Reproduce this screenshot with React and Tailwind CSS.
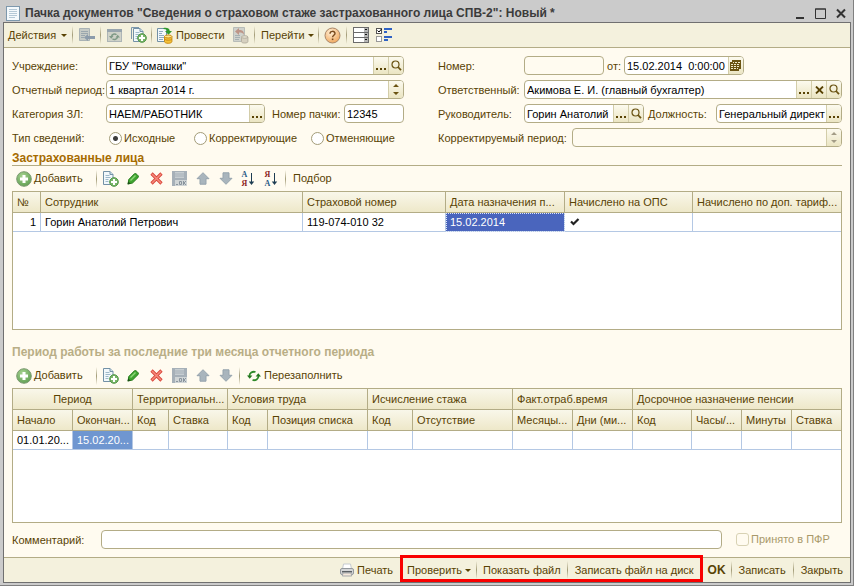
import React, { useState } from "react";

const Sep = () => (
  <span className="h-[18px] w-px shrink-0 bg-linear-to-b from-transparent via-[#a39c78] to-transparent" />
);

const Caret = () => (
  <svg width="6" height="3" viewBox="0 0 6 3" className="shrink-0">
    <path d="M0 0h6L3 3z" fill="#594304" />
  </svg>
);

const DocIcon = () => (
  <svg width="14" height="15" viewBox="0 0 14 15">
    <rect x="0.5" y="0.5" width="13" height="14" fill="#f4f9fc" stroke="#7d98ad" />
    <path d="M3 3.5h8M3 5.5h8M3 7.5h8M3 9.5h8M3 11.5h6" stroke="#b4c8d6" />
  </svg>
);

const SaveCloseIcon = () => (
  <svg width="16" height="16" viewBox="0 0 16 16">
    <path d="M.5 1.5h10v12H.5z" fill="#c6cbc6" stroke="#a9b2b4" />
    <path d="M2 4.500h7M2 6.500h7M2 8.500h4M2 10.500h3" stroke="#9aa7ae" />
    <path d="M5 10.500l4-3.500v2h7v3H9v2z" fill="#8c9cab" />
  </svg>
);

const ReloadIcon = () => (
  <svg width="15" height="13" viewBox="0 0 15 13">
    <rect x="0.5" y="0.5" width="14" height="12" fill="#cfd2c8" stroke="#adb5b6" />
    <path d="M0 0h15v3H0z" fill="#98a5ad" />
    <path d="M4.500 7.500a3 2.800 0 0 1 5-1.700M10.500 8a3 2.800 0 0 1-5 1.700" fill="none" stroke="#7f9a86" strokeWidth="1.500" />
    <path d="M2 7h4.500L4.200 9.700zM8.500 8.500H13l-2.300-2.700z" fill="#7f9a86" />
  </svg>
);

const AddCopyIcon = ({ double }) => (
  <svg width="16" height="16" viewBox="0 0 16 16">
    {double && <path d="M.5 12V.5H8" fill="none" stroke="#7d98ad" />}
    <g transform={double ? "translate(2 1)" : "translate(0 0)"}>
      <path d="M.5 .5h6.500l3 3V13.500H.5z" fill="#f2f8fb" stroke="#7391a6" />
      <path d="M7 .5v3h3" fill="#cfe0ea" stroke="#7391a6" />
      <path d="M2.500 4.500h4M2.500 6.500h5M2.500 8.500h3M2.500 10.500h3" stroke="#9db8c9" />
    </g>
    <circle cx="11" cy="11" r="4.300" fill="#79b668" stroke="#4f9446" />
    <path d="M11 8v6M8 11h6" stroke="#fff" strokeWidth="2" />
  </svg>
);

const PostIcon = () => (
  <svg width="16" height="17" viewBox="0 0 16 17">
    <path d="M.5 1.5h9v13h-9z" fill="#f2f8fb" stroke="#7391a6" />
    <path d="M2 4.500h4M2 6.500h3M2 8.500h5M2 10.500h5M2 12.500h4" stroke="#8fabc0" />
    <path d="M6.500 1C10 .3 12.500 1.500 12.800 4H15l-3.500 3.800L8 4h2.200C10 2.800 8.800 2 6.500 2z" fill="#2f9a2b" />
    <path d="M7.500 9.500v5c0 1 1.500 1.800 3.700 1.800s3.700-.8 3.700-1.800v-5z" fill="#f5c33a" stroke="#c98c14" />
    <ellipse cx="11.200" cy="9.500" rx="3.700" ry="1.500" fill="#fde58b" stroke="#c98c14" />
    <path d="M7.500 12c1 1.700 6.400 1.700 7.400 0" fill="none" stroke="#c98c14" />
  </svg>
);

const UnpostIcon = () => (
  <svg width="16" height="17" viewBox="0 0 16 17" opacity="0.8">
    <path d="M.5 .5h11v14H.5z" fill="#c6cbc9" stroke="#a9b0b0" />
    <path d="M2 8.500h5M2 10.500h5M2 12.500h4" stroke="#93a0a8" />
    <path d="M2 4.500L6 1v2c3.500 0 5 1.200 5 5-1-2-2.200-2.500-5-2.500V8z" fill="#b07f72" />
    <path d="M8.500 10v4.500c0 1 1.200 1.500 3.200 1.500s3.200-.5 3.200-1.500V10z" fill="#cfc9b8" stroke="#a8a294" />
    <ellipse cx="11.700" cy="10" rx="3.200" ry="1.300" fill="#e0dccd" stroke="#a8a294" />
  </svg>
);

const HelpIcon = () => (
  <svg width="17" height="17" viewBox="0 0 17 17">
    <defs>
      <radialGradient id="help" cx="0.4" cy="0.3" r="0.8">
        <stop offset="0" stopColor="#fff0d8" />
        <stop offset="1" stopColor="#efa050" />
      </radialGradient>
    </defs>
    <circle cx="8.500" cy="8.500" r="7.500" fill="url(#help)" stroke="#a8876a" />
    <path d="M6 6.800C6 3.500 11 3.600 11 6.500c0 1.800-2.400 1.800-2.400 3.700" fill="none" stroke="#7a4a1c" strokeWidth="1.400" />
    <rect x="7.800" y="11.500" width="1.600" height="1.600" fill="#7a4a1c" />
  </svg>
);

const ListIcon = () => (
  <svg width="16" height="16" viewBox="0 0 16 16">
    {[0, 5, 10].map((y) => (
      <g key={y}>
        <rect x="0.5" y={y + 0.5} width="15" height="5" fill="#fff" stroke="#6b6b6b" />
        <rect x="11" y={y + 1} width="4" height="4" fill="#b5b5b5" />
        <path d={`M12 ${y + 2}h2v1h-2z`} fill="#111" />
      </g>
    ))}
  </svg>
);

const ChecksIcon = () => (
  <svg width="16" height="16" viewBox="0 0 16 16">
    <rect x="0.5" y="1.5" width="5" height="5" fill="#fff" stroke="#555" />
    <path d="M1.500 3.500l1.500 1.500 2.500-3" fill="none" stroke="#000" />
    <rect x="0.5" y="9.500" width="5" height="5" fill="#fff" stroke="#999" />
    <path d="M8 1h8v2H8zM8 4h3v2H8zM8 9h8v2H8zM8 12h4v2H8z" fill="#2f62c4" />
  </svg>
);

const PlusIcon = () => (
  <svg width="16" height="16" viewBox="0 0 16 16">
    <defs>
      <radialGradient id="plus" cx="0.4" cy="0.3" r="0.8">
        <stop offset="0" stopColor="#a5d18f" />
        <stop offset="1" stopColor="#5b9c4e" />
      </radialGradient>
    </defs>
    <circle cx="8" cy="8" r="7.300" fill="url(#plus)" stroke="#7d9a72" />
    <path d="M8 4v8M4 8h8" stroke="#fff" strokeWidth="3" />
  </svg>
);

const PencilIcon = () => (
  <svg width="13" height="13" viewBox="0 0 13 13">
    <path d="M1 12l.8-4.500L7.500 1.700c1-1 4.800 2.300 3.800 3.600L5.500 11z" fill="#3fa52f" stroke="#267a1c" />
    <path d="M3.500 8.500L8.500 3.500" stroke="#8ed67a" strokeWidth="1.500" />
    <path d="M.5 12.500l.8-3 2.200 2z" fill="#1c4d16" />
  </svg>
);

const DeleteIcon = () => (
  <svg width="13" height="13" viewBox="0 0 13 13">
    <path d="M1.500 1.500l10 10M11.500 1.500l-10 10" stroke="#d9453a" strokeWidth="3.200" />
    <path d="M2 2l9 9M11 2l-9 9" stroke="#f58a7c" strokeWidth="1.500" />
  </svg>
);

const FloppyIcon = () => (
  <svg width="15" height="15" viewBox="0 0 15 15">
    <rect width="15" height="15" fill="#a6b0b8" />
    <rect x="3" y="1" width="9" height="6" fill="#c6cdd1" />
    <path d="M3 3h9M3 5h9" stroke="#a6b0b8" />
    <rect x="3" y="9" width="12" height="6" fill="#d0d5d6" />
    <path d="M4 13.500h2M7.500 10.500h2v3h-2zM11.500 10v4M14 10l-2 2 2 2" fill="none" stroke="#8a959e" />
  </svg>
);

const ArrowIcon = ({ down }) => (
  <svg width="14" height="13" viewBox="0 0 14 13" className={down ? "rotate-180" : ""}>
    <path d="M7 .7l6 6h-3v5.500H4V6.700H1z" fill="#a9b5bd" stroke="#95a3ad" strokeLinejoin="round" />
  </svg>
);

const SortIcon = ({ top, bottom, topClass, bottomClass }) => (
  <span className="flex items-center gap-px font-['Liberation_Serif',serif] text-[8px] leading-[9px] font-bold">
    <span className="flex flex-col">
      <span className={topClass}>{top}</span>
      <span className={bottomClass}>{bottom}</span>
    </span>
    <svg width="7" height="15" viewBox="0 0 7 15">
      <path d="M3.500 2v10" stroke="#1d3c52" />
      <path d="M.8 10.500h5.400L3.500 14z" fill="#1d3c52" />
    </svg>
  </span>
);

const RefillIcon = () => (
  <svg width="14" height="12" viewBox="0 0 14 12">
    <path d="M2.500 6A4.500 4 0 0 1 8.500 2M11.500 6a4.500 4 0 0 1-6 4" fill="none" stroke="#2f8a2a" strokeWidth="1.800" />
    <path d="M0 5.500h5.400L2.700 8.800zM8.600 6.500H14l-2.700-3.300z" fill="#24761f" />
  </svg>
);

const PrinterIcon = () => (
  <svg width="14" height="14" viewBox="0 0 14 14">
    <path d="M3.500 1h7l1 5h-9z" fill="#fff" stroke="#c5cacf" />
    <rect x="0.5" y="5.500" width="13" height="6" rx="1.500" fill="#d3d5d6" stroke="#94999d" />
    <path d="M2 8h10v1.500H2z" fill="#5b6064" />
    <path d="M3 10h8l.7 3H2.300z" fill="#f6e9dc" stroke="#a5a9ab" />
  </svg>
);

const SearchIcon = () => (
  <svg width="11" height="11" viewBox="0 0 11 11">
    <circle cx="4.500" cy="4.500" r="3.500" fill="none" stroke="#6b5413" strokeWidth="1.200" />
    <path d="M7 7l3 3.200" stroke="#6b5413" strokeWidth="1.800" />
  </svg>
);

const CalendarIcon = () => (
  <svg width="11" height="11" viewBox="0 0 11 11" shapeRendering="crispEdges">
    <path d="M2 0h9v9H9v2H0V2h2z" fill="#6b5413" />
    <path
      d="M3 2h1v1H3zM5 2h2v1H5zM8 2h2v1H8zM1 4h2v1H1zM4 4h2v1H4zM7 4h2v1H7zM1 6h2v1H1zM4 6h2v1H4zM7 6h2v1H7zM1 8h2v1H1zM4 8h2v1H4zM7 8h1v1H7z"
      fill="#f1ebcd"
    />
  </svg>
);

const ClearIcon = () => (
  <svg width="9" height="8" viewBox="0 0 9 8">
    <path d="M1 .5l7 7M8 .5l-7 7" stroke="#594304" strokeWidth="1.800" />
  </svg>
);

const SpinIcon = ({ faded }) => (
  <svg width="6" height="11" viewBox="0 0 6 11">
    <path d="M0 3h6L3 0zM0 8h6L3 11z" fill={faded ? "#a39c86" : "#6b5413"} />
  </svg>
);

const DotsIcon = () => (
  <svg width="10" height="10" viewBox="0 0 10 10">
    <path d="M0 7h2v2H0zM4 7h2v2H4zM8 7h2v2H8z" fill="#594304" />
  </svg>
);

const fieldIcons = {
  dots: ["Выбрать", <DotsIcon />],
  search: ["Открыть", <SearchIcon />],
  clear: ["Очистить", <ClearIcon />],
  calendar: ["Календарь", <CalendarIcon />],
  spin: ["Изменить", <SpinIcon />],
  spinOff: ["Изменить", <SpinIcon faded />],
};

const Field = ({ id, value = "", buttons = [], disabled, className = "flex-1" }) => {
  const [text, setText] = useState(value);
  return (
    <div
      className={`flex h-[19px] min-w-0 overflow-hidden rounded-[4px] border border-[#b3ac86] ${
        disabled ? "bg-[#fffbf0]" : "bg-white"
      } ${className}`}
    >
      <input
        id={id}
        type="text"
        value={text}
        disabled={disabled}
        onChange={(e) => setText(e.target.value)}
        className="w-0 min-w-0 flex-1 bg-transparent pt-[2px] pl-[2px] text-black outline-none"
      />
      {buttons.map((name) => (
        <button
          key={name}
          type="button"
          aria-label={fieldIcons[name][0]}
          className="flex w-[15px] shrink-0 items-center justify-center border-l border-[#d3cda9] bg-linear-to-b from-[#fcfaee] to-[#ebe5c3]"
        >
          {fieldIcons[name][1]}
        </button>
      ))}
    </div>
  );
};

const Label = ({ htmlFor, children, className = "" }) => (
  <label htmlFor={htmlFor} className={`shrink-0 pt-[2px] whitespace-nowrap ${className}`}>
    {children}
  </label>
);

const IconButton = ({ label, children, className = "w-[23px]" }) => (
  <button
    type="button"
    aria-label={label}
    className={`flex h-full shrink-0 items-center justify-center ${className}`}
  >
    {children}
  </button>
);

const TableToolbar = ({ children, sortable }) => (
  <div className="flex h-[25px] items-center">
    <button type="button" className="flex w-[84px] items-center gap-[2px] pl-1">
      <PlusIcon />
      <span>
        <u>Д</u>обавить
      </span>
    </button>
    <Sep />
    <div className="flex h-full items-center px-[2px]">
      <IconButton label="Скопировать"><AddCopyIcon /></IconButton>
      <IconButton label="Изменить"><PencilIcon /></IconButton>
      <IconButton label="Удалить"><DeleteIcon /></IconButton>
      <IconButton label="Закончить редактирование"><FloppyIcon /></IconButton>
      <IconButton label="Вверх"><ArrowIcon /></IconButton>
      <IconButton label="Вниз"><ArrowIcon down /></IconButton>
      {sortable && (
        <>
          <IconButton label="По возрастанию">
            <SortIcon top="А" bottom="Я" topClass="text-[#1f5a86]" bottomClass="text-[#8c1c1c]" />
          </IconButton>
          <IconButton label="По убыванию">
            <SortIcon top="Я" bottom="А" topClass="text-[#8c1c1c]" bottomClass="text-[#1f5a86]" />
          </IconButton>
        </>
      )}
    </div>
    <Sep />
    <button type="button" className="flex items-center gap-[3px] px-[7px]">
      {children}
    </button>
  </div>
);

const Th = ({ children, className = "text-left", ...rest }) => (
  <th
    className={`h-[21px] overflow-hidden border-r border-b border-[#b3ac86] bg-linear-to-b from-[#f9f7ea] to-[#eee8c9] px-1 font-normal whitespace-nowrap last:border-r-0 ${className}`}
    {...rest}
  >
    {children}
  </th>
);

const Td = ({ children, className = "text-black" }) => (
  <td
    className={`h-[19px] overflow-hidden border-r border-b border-[#b4c8e4] px-1 whitespace-nowrap last:border-r-0 ${className}`}
  >
    {children}
  </td>
);

const periodGroups = [
  ["Период", 2],
  ["Территориальн...", 2],
  ["Условия труда", 2],
  ["Исчисление стажа", 2],
  ["Факт.отраб.время", 2],
  ["Досрочное назначение пенсии", 4],
];

const periodColumns = [
  "Начало", "Окончан...", "Код", "Ставка", "Код", "Позиция списка", "Код",
  "Отсутствие", "Месяцы...", "Дни (ми...", "Код", "Часы/...", "Минуты", "Ставка",
];

const kinds = [
  ["Исходные", "w-[85px]"],
  ["Корректирующие", "w-[117px]"],
  ["Отменяющие", ""],
];

const App = () => {
  const [kind, setKind] = useState("Исходные");

  return (
    <div className="flex min-h-screen flex-col border-r border-b border-[#808080] bg-[#cbcbcb] pr-[2px] pb-[2px] pl-[3px] font-['Liberation_Sans',sans-serif] text-[11px] leading-[13px] text-[#594304]">
      <header className="flex h-[22px] items-center pt-1 pr-[5px] pl-[3px] text-[#3b3b3b]">
        <DocIcon />
        <h1 className="flex-1 pl-[5px] text-[12px] font-bold whitespace-nowrap">
          Пачка документов "Сведения о страховом стаже застрахованного лица СПВ-2": Новый *
        </h1>
        <div className="flex items-center gap-[10px]">
          <button type="button" aria-label="Свернуть">
            <svg width="9" height="11" viewBox="0 0 9 11"><path d="M0 9h8v2H0z" fill="#333" /></svg>
          </button>
          <button type="button" aria-label="Развернуть">
            <svg width="11" height="11" viewBox="0 0 11 11"><path d="M.5 1h10v9.500H.5zM0 1h11" fill="none" stroke="#333" /></svg>
          </button>
          <button type="button" aria-label="Закрыть окно">
            <svg width="10" height="11" viewBox="0 0 10 11"><path d="M1 1.500l8 8M9 1.500l-8 8" stroke="#333" strokeWidth="2" /></svg>
          </button>
        </div>
      </header>

      <div className="flex flex-1 flex-col border border-[#707070] bg-[#fffbf0]">
        <div className="flex h-[25px] items-center border-b border-[#b3ac86] bg-[#f4f1dd]">
          <button type="button" className="flex w-[68px] items-center gap-[5px] pl-1">
            Действия <Caret />
          </button>
          <Sep />
          <IconButton label="Записать и закрыть" className="w-[27px]"><SaveCloseIcon /></IconButton>
          <Sep />
          <IconButton label="Перечитать" className="w-[26px]"><ReloadIcon /></IconButton>
          <IconButton label="Скопировать" className="w-[24px]"><AddCopyIcon double /></IconButton>
          <Sep />
          <button type="button" className="flex w-[76px] items-center gap-[3px] pl-[5px]">
            <PostIcon /> Провести
          </button>
          <IconButton label="Отмена проведения" className="w-[26px]"><UnpostIcon /></IconButton>
          <Sep />
          <button type="button" className="flex w-[63px] items-center gap-[3px] pl-[6px]">
            Перейти <Caret />
          </button>
          <Sep />
          <IconButton label="Справка" className="w-[27px]"><HelpIcon /></IconButton>
          <Sep />
          <IconButton label="Список" className="w-[27px]"><ListIcon /></IconButton>
          <IconButton label="Настройка" className="w-[20px]"><ChecksIcon /></IconButton>
        </div>

        <main className="flex flex-1 flex-col p-2">
          <div className="flex gap-[34px]">
            <div className="flex w-[392px] shrink-0 flex-col gap-[5px]">
              <div className="flex items-center">
                <Label htmlFor="org" className="w-[94px]">Учреждение:</Label>
                <Field id="org" value={'ГБУ "Ромашки"'} buttons={["dots", "search"]} />
              </div>
              <div className="flex items-center">
                <Label htmlFor="period" className="w-[94px]">Отчетный период:</Label>
                <Field id="period" value="1 квартал 2014 г." buttons={["spin"]} />
              </div>
              <div className="flex items-center">
                <Label htmlFor="category" className="w-[94px]">Категория ЗЛ:</Label>
                <Field id="category" value="НАЕМ/РАБОТНИК" buttons={["dots"]} />
                <Label htmlFor="pack" className="w-[79px] pl-[7px]">Номер пачки:</Label>
                <Field id="pack" value="12345" className="w-[60px]" />
              </div>
              <div className="flex h-[19px] items-center pt-[2px]">
                <span className="w-[97px]">Тип сведений:</span>
                {kinds.map(([name, width]) => (
                  <label key={name} className={`flex items-center gap-[2px] whitespace-nowrap ${width}`}>
                    <input
                      type="radio"
                      name="kind"
                      checked={kind === name}
                      onChange={() => setKind(name)}
                      className="size-[13px] appearance-none rounded-full border border-[#a39c78] bg-white checked:bg-[radial-gradient(circle,#3d3d3d_2px,#fff_3px)]"
                    />
                    {name}
                  </label>
                ))}
              </div>
            </div>

            <div className="flex min-w-0 flex-1 flex-col gap-[5px]">
              <div className="flex items-center">
                <Label htmlFor="number" className="w-[86px]">Номер:</Label>
                <Field id="number" disabled className="w-[80px]" />
                <Label htmlFor="date" className="px-[3px]">от:</Label>
                <Field id="date" value="15.02.2014  0:00:00" buttons={["calendar"]} className="w-[120px]" />
              </div>
              <div className="flex items-center">
                <Label htmlFor="owner" className="w-[86px]">Ответственный:</Label>
                <Field id="owner" value="Акимова Е. И. (главный бухгалтер)" buttons={["dots", "clear", "search"]} />
              </div>
              <div className="flex items-center">
                <Label htmlFor="head" className="w-[86px]">Руководитель:</Label>
                <Field id="head" value="Горин Анатолий" buttons={["dots", "search"]} className="w-[120px]" />
                <Label htmlFor="post" className="w-[72px] pl-1">Должность:</Label>
                <Field id="post" value="Генеральный директ" buttons={["dots"]} />
              </div>
              <div className="flex items-center">
                <Label htmlFor="fixed" className="w-[134px]">Корректируемый период:</Label>
                <Field id="fixed" disabled buttons={["spinOff"]} />
              </div>
            </div>
          </div>

          <h2 className="mt-px flex h-[18px] items-end border-b border-[#b3ac86] text-[12px] leading-[14px] font-bold text-[#a66b00]">
            Застрахованные лица
          </h2>
          <TableToolbar sortable>Подбор</TableToolbar>
          <div className="h-[139px] border border-[#b3ac86] bg-white">
            <table className="w-full table-fixed border-separate border-spacing-0">
              <colgroup>
                <col className="w-[28px]" />
                <col className="w-[262px]" />
                <col className="w-[143px]" />
                <col className="w-[119px]" />
                <col className="w-[128px]" />
                <col />
              </colgroup>
              <thead>
                <tr>
                  <Th>№</Th>
                  <Th>Сотрудник</Th>
                  <Th>Страховой номер</Th>
                  <Th>Дата назначения п...</Th>
                  <Th>Начислено на ОПС</Th>
                  <Th>Начислено по доп. тариф...</Th>
                </tr>
              </thead>
              <tbody>
                <tr>
                  <Td className="text-right text-black">1</Td>
                  <Td>Горин Анатолий Петрович</Td>
                  <Td>119-074-010 32</Td>
                  <Td className="bg-[#4a65bd] text-white outline-1 -outline-offset-1 outline-dotted outline-[#dfe6f7]">15.02.2014</Td>
                  <Td>
                    <svg width="10" height="8" viewBox="0 0 10 8" className="ml-px">
                      <path d="M1 3.500l2.500 2.500L8.500 1" fill="none" stroke="#222" strokeWidth="2.200" />
                    </svg>
                  </Td>
                  <Td />
                </tr>
              </tbody>
            </table>
          </div>

          <h2 className="mt-3 flex h-[21px] items-center text-[12px] font-bold text-[#b9ae86]">
            Период работы за последние три месяца отчетного периода
          </h2>
          <TableToolbar>
            <RefillIcon /> Перезаполнить
          </TableToolbar>
          <div className="min-h-[135px] flex-1 border border-[#b3ac86] bg-white">
            <table className="w-full table-fixed border-separate border-spacing-0">
              <colgroup>
                <col className="w-[60px]" />
                <col className="w-[60px]" />
                <col className="w-[36px]" />
                <col className="w-[59px]" />
                <col className="w-[40px]" />
                <col className="w-[100px]" />
                <col className="w-[45px]" />
                <col className="w-[100px]" />
                <col className="w-[60px]" />
                <col className="w-[60px]" />
                <col className="w-[59px]" />
                <col className="w-[50px]" />
                <col className="w-[50px]" />
                <col />
              </colgroup>
              <thead>
                <tr>
                  {periodGroups.map(([name, span], i) => (
                    <Th key={name} colSpan={span} className={i === 0 ? "text-center" : "text-left"}>
                      {name}
                    </Th>
                  ))}
                </tr>
                <tr>
                  {periodColumns.map((name, i) => (
                    <Th key={i}>{name}</Th>
                  ))}
                </tr>
              </thead>
              <tbody>
                <tr>
                  {periodColumns.map((name, i) => {
                    if (i === 0) return <Td key={i}>01.01.20...</Td>;
                    if (i === 1) return <Td key={i} className="bg-[#6f96d0] text-white">15.02.20...</Td>;
                    return <Td key={i} />;
                  })}
                </tr>
              </tbody>
            </table>
          </div>

          <div className="mt-[7px] flex items-center">
            <Label htmlFor="comment" className="w-[89px]">Комментарий:</Label>
            <Field id="comment" />
            <label className="ml-[14px] flex w-[106px] items-center gap-[2px] text-[#a8996a]">
              <input
                type="checkbox"
                disabled
                className="size-[13px] appearance-none rounded-[3px] border border-[#d8d2b4] bg-[#fffbf0]"
              />
              Принято в ПФР
            </label>
          </div>
        </main>

        <footer className="flex h-[25px] items-center justify-end border-t border-[#b3ac86] bg-[#f4f1dd]">
          <button type="button" className="flex items-center gap-[3px] px-[7px]">
            <PrinterIcon /> Печать
          </button>
          <div className="relative flex h-full items-center pr-[2px]">
            <button type="button" className="flex items-center gap-[3px] pr-[5px] pl-[7px]">
              Проверить <Caret />
            </button>
            <Sep />
            <button type="button" className="px-[6px]">Показать файл</button>
            <Sep />
            <button type="button" className="px-[7px]">Записать файл на диск</button>
            <span className="pointer-events-none absolute inset-x-0 -top-[3px] bottom-0 border-3 border-[#f90000]" />
          </div>
          <button type="button" className="px-[5px] text-[12px] font-bold">OK</button>
          <Sep />
          <button type="button" className="px-[7px]">Записать</button>
          <Sep />
          <button type="button" className="px-[7px]">Закрыть</button>
        </footer>
      </div>
    </div>
  );
};

export default App;
